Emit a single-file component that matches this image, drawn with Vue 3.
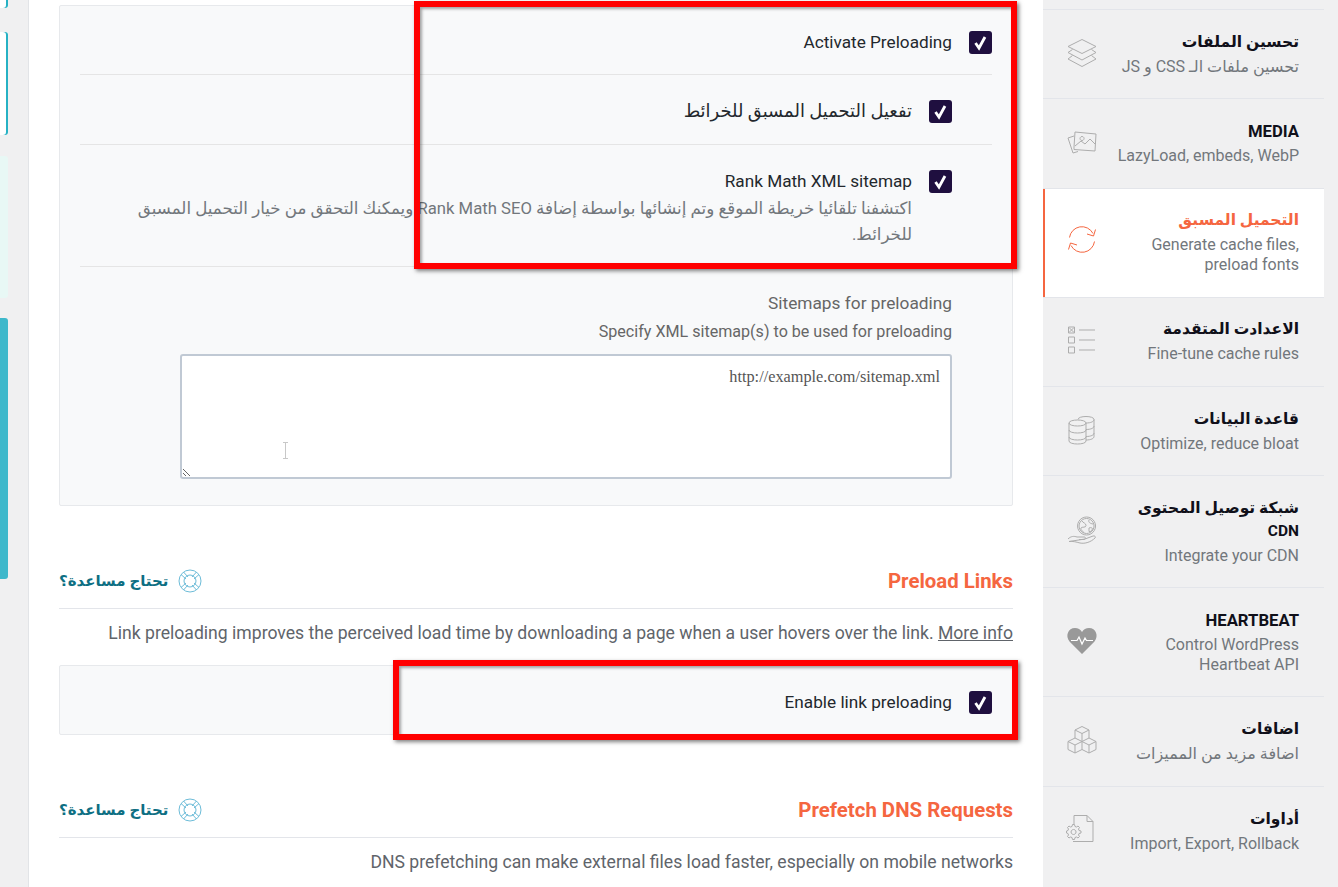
<template>
  <div class="page" dir="rtl">
    <aside class="nav">
      <a
        v-for="item in navItems"
        :key="item.title"
        class="nav-item"
        :class="{ active: item.active }"
      >
        <div class="nav-text">
          <div class="nav-title" :class="{ latin: item.latin }">{{ item.title }}</div>
          <div class="nav-desc" v-html="item.desc"></div>
        </div>
        <svg class="nav-icon" viewBox="0 0 30 30" fill="none" stroke="currentColor" stroke-width="1">
          <path v-if="item.icon" :d="item.icon" />
          <path v-if="item.fill" :d="item.fill" fill="#999" stroke="none" />
          <path v-if="item.pulse" :d="item.pulse" stroke="#fff" stroke-width="1.2" />
        </svg>
      </a>
    </aside>

    <main class="main">
      <div class="card">
        <div class="row">
          <span class="check"><svg viewBox="0 0 23 23"><path d="M6.500 12l3.500 5 6-11" /></svg></span>
          <span class="label">Activate Preloading</span>
        </div>
        <div class="row sub">
          <span class="check"><svg viewBox="0 0 23 23"><path d="M6.500 12l3.500 5 6-11" /></svg></span>
          <span class="label ar">تفعيل التحميل المسبق للخرائط</span>
        </div>
        <div class="row sub tall">
          <span class="check"><svg viewBox="0 0 23 23"><path d="M6.500 12l3.500 5 6-11" /></svg></span>
          <div>
            <span class="label">Rank Math XML sitemap</span>
            <p class="row-note">اكتشفنا تلقائيا خريطة الموقع وتم إنشائها بواسطة إضافة Rank Math SEO ويمكنك التحقق من خيار التحميل المسبق للخرائط.</p>
          </div>
        </div>
        <div class="sitemaps">
          <div class="sitemaps-title">Sitemaps for preloading</div>
          <div class="sitemaps-desc">Specify XML sitemap(s) to be used for preloading</div>
          <textarea class="sitemaps-input" placeholder="http://example.com/sitemap.xml"></textarea>
          <svg class="ibeam" viewBox="0 0 7 17" fill="none" stroke="#c8c8c8"><path d="M1 .5h5M3.500.5v16M1 16.500h5" /></svg>
        </div>
      </div>

      <div class="section-head">
        <h3>Preload Links</h3>
        <a class="help">
          <svg viewBox="0 0 24 24" fill="none" stroke="#6dbcd8" stroke-width="1"><circle cx="12" cy="12" r="11" /><circle cx="12" cy="12" r="6" /><path d="M3 5.500l5 4.500M5.500 3l4.500 5M21 5.500l-5 4.500M18.500 3 14 8M3 18.500l5-4.500M5.500 21l4.500-5M21 18.500 16 14M18.500 21 14 16" /></svg>
          <span>تحتاج مساعدة؟</span>
        </a>
      </div>
      <p class="section-desc"><bdi>Link preloading improves the perceived load time by downloading a page when a user hovers over the link. <u>More info</u></bdi></p>

      <div class="card single">
        <div class="row last">
          <span class="check"><svg viewBox="0 0 23 23"><path d="M6.500 12l3.500 5 6-11" /></svg></span>
          <span class="label">Enable link preloading</span>
        </div>
      </div>

      <div class="section-head">
        <h3>Prefetch DNS Requests</h3>
        <a class="help">
          <svg viewBox="0 0 24 24" fill="none" stroke="#6dbcd8" stroke-width="1"><circle cx="12" cy="12" r="11" /><circle cx="12" cy="12" r="6" /><path d="M3 5.500l5 4.500M5.500 3l4.500 5M21 5.500l-5 4.500M18.500 3 14 8M3 18.500l5-4.500M5.500 21l4.500-5M21 18.500 16 14M18.500 21 14 16" /></svg>
          <span>تحتاج مساعدة؟</span>
        </a>
      </div>
      <p class="section-desc"><bdi>DNS prefetching can make external files load faster, especially on mobile networks</bdi></p>
    </main>

    <div class="strip">
      <div class="tab t0"></div>
      <div class="tab t1"></div>
      <div class="tab t2"></div>
      <div class="tab t3"></div>
    </div>

    <div class="mark mark-top"></div>
    <div class="mark mark-link"></div>
  </div>
</template>

<script setup>
const navItems = [
  {
    title: 'تحسين الملفات',
    desc: 'تحسين ملفات الـ CSS و JS',
    icon: 'M15 1.500 29 8.500 15 15.500 1 8.500ZM5.500 11.500 1 14.500 15 22 29 14.500 24.500 11.500M5.500 17.500 1 21 15 28.500 29 21 24.500 17.500'
  },
  {
    title: 'MEDIA',
    latin: true,
    desc: 'LazyLoad, embeds, WebP',
    icon: 'M7 9 1 11 6 26 11 24.500M7 20 8 5 29 7 28 24 7 22.500ZM8 19l6-5 4 3 5-5 5 5M15 9.500a2 2 0 1 0 .1 0Z'
  },
  {
    title: 'التحميل المسبق',
    desc: 'Generate cache files,<br>preload fonts',
    active: true,
    icon: 'M2.500 11.500A12.500 12.500 0 0 1 26 7.500M27.500 15.500A12.500 12.500 0 0 1 4 19.500M28.500 3.500 26.500 10 20 8M1.500 23.500 3.500 17 10 19'
  },
  {
    title: 'الاعدادت المتقدمة',
    desc: 'Fine-tune cache rules',
    icon: 'M1.500 2h6v6h-6ZM1.500 12h6v6h-6ZM1.500 22h6v6h-6ZM12 5h16M12 15h16M12 25h16M2 2.500l5 5M7 2.500l-5 5'
  },
  {
    title: 'قاعدة البيانات',
    desc: 'Optimize, reduce bloat',
    icon: 'M2 8c0-4 17-4 17 0s-17 4-17 0v18c0 4 17 4 17 0V8M2 15c0 4 17 4 17 0M2 22c0 4 17 4 17 0M11 4.500c0-4 16-4 16 0v17c0 2-3 3.500-8 3.500M27 4.500c0 2-3 3.500-8 3.500M27 11c0 2-3 3.500-8 3.500M27 18c0 2-3 3.500-8 3.500'
  },
  {
    title: 'شبكة توصيل المحتوى CDN',
    desc: 'Integrate your CDN',
    icon: 'M19.500 2a9 9 0 1 0 .1 0ZM19.500 3.500a7.500 7.500 0 1 0 .1 0ZM15 6c1 2 4 2 4 4.500s-4 1-5 2.500 2 3 3 5M22 5c-1 2.500 1.500 3.500 4 4M22 13c2-1 3.500 0 3.500 1-1 2-2 3-3.500 2.500ZM1 24c3-3 6-3 9-2h7c2 0 2 2 0 2.500h-5M18 24l8-3c2-.5 3 1 2 2-4 4-10 6-15 5-4-1-7-2-11-1.500Z'
  },
  {
    title: 'HEARTBEAT',
    latin: true,
    desc: 'Control WordPress<br>Heartbeat API',
    fill: 'M15 28 2.500 15.500C-2 10 1 2 8 2c3 0 5.500 1.500 7 4 1.500-2.500 4-4 7-4 7 0 10 8 5.500 13.500Z',
    pulse: 'M4 14.500h6l2-3.500 3 7 3-6 1.500 2.500H26'
  },
  {
    title: 'اضافات',
    desc: 'اضافة مزيد من المميزات',
    icon: 'M15 1.500 22 5v8l-7 3.500L8 13V5ZM8 5l7 3.500L22 5M15 8.500v8M8 13 1 16.500v8L8 28l7-3.500 7 3.500 7-3.500v-8L22 13M1 16.500 8 20l7-3.500M8 20v8M15 16.500v8M15 16.500 22 20l7-3.500M22 20v8'
  },
  {
    title: 'أداوات',
    desc: 'Import, Export, Rollback',
    icon: 'M7 10V1.500h13l6 6v20H6M20 1.500v6h6M8 12.500l1.500.5 1.500-1 1.500 1.500-1 1.500.5 1.500 2 .5v2l-2 .5-.5 1.500 1 1.500L11 24l-1.500-1-1.500.5-.5 2H5.500l-.5-2-1.500-.5-1.500 1L.5 22.500l1-1.500-.5-1.500L-.5 19v-2l1.500-.5.500-1.500-1-1.500L2 12l1.500 1L5 12.500l.5-2h2ZM6.500 15.500a2.500 2.500 0 1 0 .1 0Z'
  }
]
</script>

<style>
html,
body {
  margin: 0;
  background: #f0f0f1;
}
</style>

<style scoped>
.page {
  position: relative;
  display: flex;
  height: 887px;
  overflow: hidden;
  background: #f0f0f1;
  font-family: Roboto, "DejaVu Sans", sans-serif;
  color: #23282d;
}

.nav {
  flex: none;
  box-sizing: border-box;
  width: 281px;
  margin-right: 14px;
  padding-top: 9px;
}

.nav-item {
  display: flex;
  align-items: center;
  justify-content: space-between;
  padding: 20.800px 25px 21.800px 24px;
  border-top: 1px solid #e3e5ea;
  color: #adadad;
}

.nav-item.active {
  background: #fff;
  color: #f56640;
  box-shadow: inset 2px 0 0 #f56640;
}

.nav-text {
  max-width: 190px;
}

.nav-title {
  font-size: 15.500px;
  font-weight: 700;
  line-height: 23px;
  color: #10101a;
}

.nav-title.latin {
  font-size: 16.700px;
}

.active .nav-title {
  color: #f56640;
}

.nav-desc {
  margin-top: 3px;
  font-size: 16px;
  line-height: 19.700px;
  color: #72777c;
  text-align: right;
  unicode-bidi: plaintext;
}

.nav-icon {
  flex: none;
  width: 30px;
  height: 30px;
  margin-bottom: 2px;
  overflow: visible;
}

.main {
  flex: none;
  box-sizing: border-box;
  width: 1014px;
  padding: 5px 30px 0;
  background: #fff;
}

.card {
  padding: 0 20px;
  background: #f8f9fa;
  border: 1px solid #e7e9ec;
  border-radius: 2px;
}

.row {
  display: flex;
  gap: 17px;
  box-sizing: border-box;
  height: 69px;
  padding-top: 25px;
  border-bottom: 1px solid #e5e5e5;
}

.row.last {
  height: 68px;
  border-bottom: 0;
}

.row.sub {
  height: 70px;
  padding-right: 40px;
}

.row.tall {
  height: 122px;
}

.check {
  flex: none;
  width: 23px;
  height: 23px;
  background: #1f0f3f;
  border-radius: 3px;
}

.check svg {
  display: block;
  fill: none;
  stroke: #fff;
  stroke-width: 2.800;
}

.label {
  font-size: 17.200px;
  line-height: 22px;
  color: #23282d;
}

.label.ar {
  font-size: 17.900px;
}

.row-note {
  margin: 4px 0 0;
  padding-left: 20px;
  font-size: 16.700px;
  line-height: 26px;
  color: #72777c;
}

.sitemaps {
  position: relative;
  padding: 25px 40px 26px 0;
  color: #666;
}

.sitemaps-title {
  font-size: 17.300px;
  line-height: 22px;
}

.sitemaps-desc {
  margin-top: 7px;
  margin-bottom: 11px;
  font-size: 16.100px;
  line-height: 22px;
}

.sitemaps-input {
  display: block;
  box-sizing: border-box;
  width: 772px;
  height: 125px;
  margin-left: 70px;
  padding: 11px 10px;
  border: 2px solid #c0c9d4;
  border-radius: 3px;
  background: #fff;
  font-family: "Liberation Serif", serif;
  font-size: 16.300px;
  outline: none;
}

.sitemaps-input::placeholder {
  color: #555;
  opacity: 1;
}

.ibeam {
  position: absolute;
  left: 202px;
  bottom: 46px;
  width: 7px;
  height: 17px;
}

.section-head {
  display: flex;
  align-items: center;
  justify-content: space-between;
  height: 38px;
  margin-top: 56px;
  padding-bottom: 8px;
  border-bottom: 1px solid #e3e5ea;
}

.section-head h3 {
  margin: 0;
  font-size: 20.400px;
  font-weight: 700;
  color: #f56640;
}

.help {
  display: flex;
  align-items: center;
  gap: 10px;
  color: #0e6f83;
  font-size: 15px;
  font-weight: 700;
}

.help svg {
  width: 24px;
  height: 24px;
}

.section-desc {
  margin: 12px 0 20px;
  font-size: 17.600px;
  line-height: 24px;
  color: #60646a;
  white-space: nowrap;
}

.strip {
  flex: none;
  box-sizing: border-box;
  width: 29px;
  border-right: 1px solid #e2e4e7;
}

.tab {
  position: absolute;
  left: 0;
  width: 8px;
  border-radius: 0 3px 3px 0;
}

.t0 {
  top: -10px;
  height: 18px;
  background: #fff;
  box-shadow: inset -2px 0 0 #26b1c4;
}

.t1 {
  top: 32px;
  height: 103px;
  background: #fff;
  box-shadow: inset -2px 0 0 #26b1c4;
}

.t2 {
  top: 156px;
  height: 142px;
  background: #e8f8f5;
}

.t3 {
  top: 318px;
  height: 261px;
  background: #3eb8cb;
}

.mark {
  position: absolute;
  box-sizing: border-box;
  border: 6px solid #f00;
  box-shadow: 2px 2px 4px rgba(0, 0, 0, .5), inset 2px 2px 3px rgba(0, 0, 0, .35);
}

.mark-top {
  left: 414px;
  top: 1px;
  width: 603px;
  height: 268px;
}

.mark-link {
  left: 393px;
  top: 660px;
  width: 625px;
  height: 80px;
}
</style>
